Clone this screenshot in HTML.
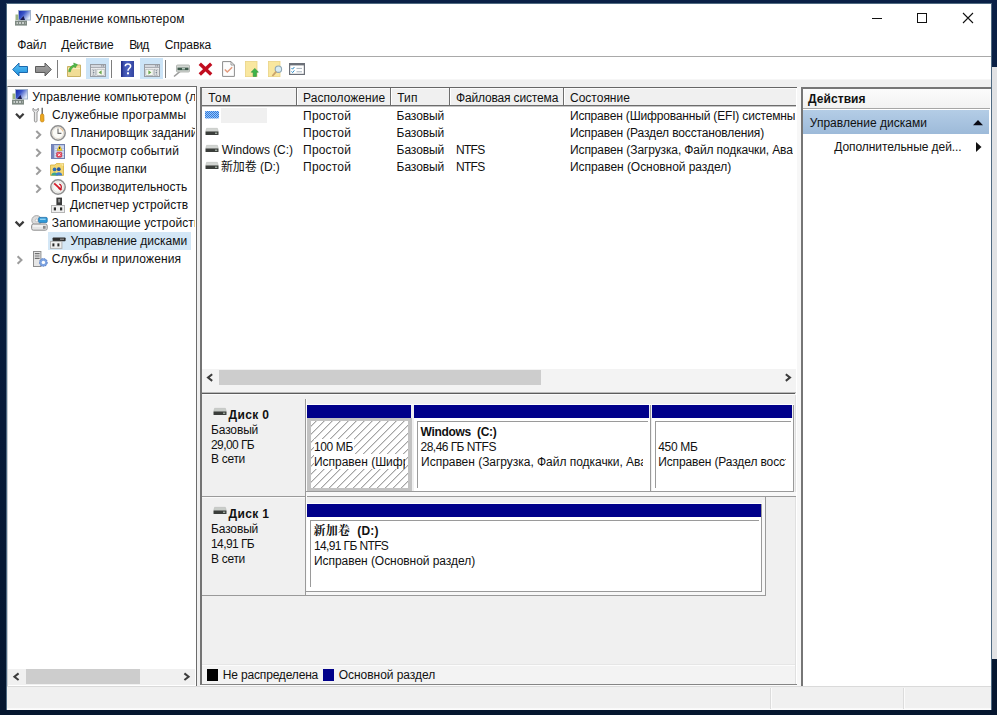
<!DOCTYPE html>
<html lang="ru">
<head>
<meta charset="utf-8">
<title>Управление компьютером</title>
<style>
html,body{margin:0;padding:0}
body{width:997px;height:715px;overflow:hidden;background:linear-gradient(#0a2046,#05162f);position:relative;font-family:"Liberation Sans","Noto Sans CJK SC",sans-serif;font-size:12px;color:#111}
.a{position:absolute}
.t{position:absolute;white-space:nowrap;line-height:16px;height:16px}
svg{position:absolute;overflow:visible}
</style>
</head>
<body>
<!-- window frame -->
<div class="a" style="left:992px;top:67px;width:5px;height:592px;background:#e1e2e4"></div>
<div class="a" style="left:6px;top:3px;width:986px;height:707px;background:#4f6a82"></div>
<div class="a" id="win" style="left:7px;top:4px;width:984px;height:706px;background:#fff"></div>
<!-- menu/toolbar separator -->
<div class="a" style="left:7px;top:56px;width:984px;height:1px;background:#a9a9a9"></div>
<!-- client area -->
<div class="a" style="left:7px;top:80px;width:984px;height:630px;background:#f0f0f0"></div>
<div class="a" style="left:7px;top:79px;width:984px;height:1px;background:#f6f6f6"></div>
<div class="a" style="left:7px;top:708px;width:984px;height:2px;background:linear-gradient(#f8f8f8,#fdfdfd)"></div>

<!-- title bar icon -->
<svg style="left:15px;top:10px" width="16" height="16" viewBox="0 0 16 16">
<defs><linearGradient id="scr" x1="0" y1="0" x2="1" y2="0.6"><stop offset="0" stop-color="#1524a8"/><stop offset="0.45" stop-color="#3a55c8"/><stop offset="1" stop-color="#dfe9f7"/></linearGradient></defs>
<rect x="3.5" y="0.5" width="12" height="9.5" fill="url(#scr)" stroke="#9fb2cc" stroke-width="1"/>
<path d="M5 10 L8.5 6 L10 10 Z" fill="#1a1a50"/>
<rect x="0.5" y="4.5" width="2.6" height="5.5" fill="#9cb381"/>
<rect x="0" y="10.6" width="12" height="5" fill="#7f8a83"/>
<rect x="1.5" y="12.2" width="9" height="1.6" fill="#d9dedb"/>
<rect x="3" y="12.2" width="1" height="1.6" fill="#6b7570"/><rect x="6" y="12.2" width="1" height="1.6" fill="#6b7570"/><rect x="9" y="12.2" width="1" height="1.6" fill="#6b7570"/>
</svg>
<!-- caption buttons -->
<svg style="left:872px;top:13px" width="102" height="11" viewBox="0 0 102 11">
<path d="M0 5.5 H10" stroke="#111" stroke-width="1"/>
<rect x="45.5" y="0.5" width="9" height="9" fill="none" stroke="#111" stroke-width="1"/>
<path d="M91 0 L101 10 M101 0 L91 10" stroke="#111" stroke-width="1.1"/>
</svg>

<!-- toolbar highlighted buttons -->
<div class="a" style="left:86px;top:58px;width:23px;height:21px;background:#cce4f7"></div>
<div class="a" style="left:140px;top:58px;width:23px;height:21px;background:#cce4f7"></div>
<!-- toolbar separators -->
<div class="a" style="left:57px;top:60px;width:1px;height:18px;background:#7d7d7d"></div>
<div class="a" style="left:111px;top:60px;width:1px;height:18px;background:#7d7d7d"></div>
<div class="a" style="left:165px;top:60px;width:1px;height:18px;background:#7d7d7d"></div>
<!-- back / forward -->
<svg style="left:12px;top:62px" width="40" height="15" viewBox="0 0 40 15">
<defs><linearGradient id="gb" x1="0" y1="0" x2="0" y2="1"><stop offset="0" stop-color="#5cc3f5"/><stop offset="1" stop-color="#1d8fde"/></linearGradient>
<linearGradient id="gf" x1="0" y1="0" x2="0" y2="1"><stop offset="0" stop-color="#a9a9a9"/><stop offset="1" stop-color="#7f7f7f"/></linearGradient></defs>
<path d="M0.7 7.5 L7 1 L7 4.5 L15.5 4.5 L15.5 10.5 L7 10.5 L7 14 Z" fill="url(#gb)" stroke="#1c68ad" stroke-width="1" stroke-linejoin="round"/>
<path d="M39.3 7.5 L33 1 L33 4.5 L23.5 4.5 L23.5 10.5 L33 10.5 L33 14 Z" fill="url(#gf)" stroke="#5c5c5c" stroke-width="1" stroke-linejoin="round"/>
</svg>
<!-- up folder -->
<svg style="left:66px;top:62px" width="16" height="16" viewBox="0 0 16 16">
<path d="M1.5 4.5 H6.5 L8 3 H14.5 V14.5 H1.5 Z" fill="#f1dd96" stroke="#c9b264" stroke-width="1"/>
<path d="M2 6.6 H14" stroke="#f9efc4" stroke-width="1"/>
<path d="M2.6 9.6 C3 6 5.4 3.4 8.2 2.8 L7.6 1 L11.4 2.6 L9 6 L8.6 4.4 C6.6 5.2 4.8 7 4.4 9.8 Z" fill="#53ba4c" stroke="#34942f" stroke-width="0.5"/>
</svg>
<!-- show/hide console tree -->
<svg style="left:90px;top:64px" width="16" height="13" viewBox="0 0 16 13">
<rect x="0.5" y="0.5" width="15" height="12" fill="#fdfdfd" stroke="#979ca3"/>
<rect x="1" y="1" width="14" height="2" fill="#d4d8de"/>
<rect x="11.2" y="1.3" width="1.2" height="1.2" fill="#7d838c"/><rect x="13" y="1.3" width="1.2" height="1.2" fill="#7d838c"/>
<path d="M1 3.6 H15" stroke="#979ca3" stroke-width="0.9"/>
<rect x="2" y="5.2" width="3.4" height="6.3" fill="#fff" stroke="#a4a9b0" stroke-width="0.7"/>
<path d="M2.9 6.8 H4.5 M2.9 8.4 H4.5 M2.9 10 H4.5" stroke="#5e6b78" stroke-width="0.9"/>
<rect x="6.8" y="5.2" width="7.4" height="6.3" fill="#f6f8f1" stroke="#a4a9b0" stroke-width="0.7"/>
<path d="M11.6 6.3 L8.6 8.4 L11.6 10.5 Z" fill="#6aa84f"/>
</svg>
<!-- help -->
<svg style="left:121px;top:61px" width="13" height="16" viewBox="0 0 13 16">
<defs><linearGradient id="gh" x1="0" y1="0" x2="1" y2="0"><stop offset="0" stop-color="#2f3f9c"/><stop offset="0.5" stop-color="#4c62c0"/><stop offset="1" stop-color="#33439f"/></linearGradient></defs>
<rect x="0" y="0" width="13" height="16" fill="url(#gh)"/>
<rect x="0" y="0" width="1.5" height="16" fill="#25318a"/>
<path d="M4.3 5.2 C4.3 2.2 9.6 2.2 9.6 5.2 C9.6 7.2 7 7.4 7 9.8" fill="none" stroke="#fff" stroke-width="1.6"/>
<rect x="6" y="11.3" width="2" height="2" fill="#fff"/>
</svg>
<!-- show/hide action pane -->
<svg style="left:144px;top:64px" width="16" height="13" viewBox="0 0 16 13">
<rect x="0.5" y="0.5" width="15" height="12" fill="#fdfdfd" stroke="#979ca3"/>
<rect x="1" y="1" width="14" height="2" fill="#d4d8de"/>
<rect x="11.2" y="1.3" width="1.2" height="1.2" fill="#7d838c"/><rect x="13" y="1.3" width="1.2" height="1.2" fill="#7d838c"/>
<path d="M1 3.6 H15" stroke="#979ca3" stroke-width="0.9"/>
<rect x="10.6" y="5.2" width="3.4" height="6.3" fill="#fff" stroke="#a4a9b0" stroke-width="0.7"/>
<path d="M11.5 6.8 H13.1 M11.5 8.4 H13.1 M11.5 10 H13.1" stroke="#5e6b78" stroke-width="0.9"/>
<rect x="1.8" y="5.2" width="7.4" height="6.3" fill="#f6f8f1" stroke="#a4a9b0" stroke-width="0.7"/>
<path d="M4.4 6.3 L7.4 8.4 L4.4 10.5 Z" fill="#6aa84f"/>
</svg>
<!-- connect disk -->
<svg style="left:173px;top:64px" width="17" height="14" viewBox="0 0 17 14">
<path d="M7 7.5 L1 12.5" stroke="#9a9a9a" stroke-width="1.6"/>
<rect x="3.5" y="1" width="13" height="7" rx="1" fill="#d4d8d4" stroke="#a5aaa5" stroke-width="0.8"/>
<rect x="4.5" y="3.6" width="11" height="2.6" fill="#3f5a4c"/>
<rect x="9" y="4.2" width="3" height="1.2" fill="#cfe0d4"/>
</svg>
<!-- delete -->
<svg style="left:198px;top:62px" width="15" height="14" viewBox="0 0 15 14">
<path d="M1.8 1.8 L13.2 12.4 M13.2 1.8 L1.8 12.4" stroke="#c10d1f" stroke-width="3.4" stroke-linecap="butt"/>
</svg>
<!-- properties (doc with check) -->
<svg style="left:222px;top:61px" width="13" height="16" viewBox="0 0 13 16">
<path d="M0.6 0.6 H9 L12.4 4 V15.4 H0.6 Z" fill="#fdfdfd" stroke="#8c8c8c" stroke-width="1"/>
<path d="M9 0.6 V4 H12.4" fill="none" stroke="#8c8c8c" stroke-width="0.9"/>
<path d="M2.8 8.5 L5.3 11 L10.2 6.2" fill="none" stroke="#e39a7c" stroke-width="1.5"/>
</svg>
<!-- export list -->
<svg style="left:245px;top:61px" width="14" height="16" viewBox="0 0 14 16">
<rect x="0.4" y="0.4" width="11.6" height="15.2" fill="#f9e79f" stroke="#ead486" stroke-width="0.8"/>
<path d="M9.8 7.4 L13.4 11.2 H11.4 V15.4 H8.2 V11.2 H6.2 Z" fill="#3db54a" stroke="#2a8f37" stroke-width="0.6"/>
</svg>
<!-- find -->
<svg style="left:268px;top:61px" width="14" height="16" viewBox="0 0 14 16">
<rect x="0.4" y="0.4" width="11.6" height="15.2" fill="#f9e79f" stroke="#ead486" stroke-width="0.8"/>
<circle cx="10.4" cy="8.2" r="3.2" fill="#d7ecf6" stroke="#8fa7b5" stroke-width="1.1"/>
<path d="M8.2 10.6 L4.4 15" stroke="#c9a36b" stroke-width="1.8"/>
</svg>
<!-- checklist -->
<svg style="left:289px;top:63px" width="16" height="12" viewBox="0 0 16 12">
<rect x="0.6" y="0.6" width="14.8" height="10.8" fill="#fff" stroke="#6c7078" stroke-width="1.2"/>
<rect x="0.6" y="0.6" width="14.8" height="1.8" fill="#6c7078"/>
<path d="M2.5 5 L3.6 6.2 L5.4 4 M2.5 8.4 L3.6 9.6 L5.4 7.4" fill="none" stroke="#2f8fcb" stroke-width="1"/>
<path d="M7.5 5.4 H13 M7.5 8.8 H13" stroke="#a9b4bf" stroke-width="1"/>
</svg>

<!-- tree panel -->
<div class="a" style="left:7px;top:86px;width:190px;height:601px;background:#fff;box-sizing:border-box;border:1px solid #6c6c6c;border-left-color:#c8ccd2"></div>
<!-- tree selection -->
<div class="a" style="left:48px;top:232px;width:143px;height:18px;background:#d4e7f6"></div>
<!-- tree scrollbar -->
<div class="a" style="left:8px;top:669px;width:187px;height:16px;background:#f0f0f0"></div>
<div class="a" style="left:26px;top:669px;width:114px;height:15px;background:#cdcdcd"></div>
<svg style="left:8px;top:669px" width="187" height="16" viewBox="0 0 187 16"><path d="M10.6 4.4 L6.4 7.7 L10.6 11" fill="none" stroke="#3c3c3c" stroke-width="2"/><path d="M176.4 4.4 L180.6 7.7 L176.4 11" fill="none" stroke="#3c3c3c" stroke-width="2"/></svg>
<!-- tree chevrons -->
<svg style="left:0;top:0" width="200" height="300" viewBox="0 0 200 300">
<g fill="none" stroke="#3a3a3a" stroke-width="2.2">
<path d="M16 113.8 L19.8 117.6 L23.6 113.8"/>
<path d="M15.6 221.6 L19.6 225.6 L23.6 221.6"/>
</g>
<g fill="none" stroke="#9c9c9c" stroke-width="2">
<path d="M36.3 131 L40.2 134.8 L36.3 138.6"/>
<path d="M36.3 149 L40.2 152.8 L36.3 156.6"/>
<path d="M36.3 167 L40.2 170.8 L36.3 174.6"/>
<path d="M36.3 185 L40.2 188.8 L36.3 192.6"/>
<path d="M17.6 256.2 L21.5 260 L17.6 263.8"/>
</g>
</svg>
<!-- root icon -->
<svg style="left:12px;top:89px" width="16" height="16" viewBox="0 0 16 16">
<rect x="3.5" y="0.5" width="12" height="9.5" fill="url(#scr)" stroke="#9fb2cc" stroke-width="1"/>
<path d="M5 10 L8.5 6 L10 10 Z" fill="#1a1a50"/>
<rect x="0.5" y="4.5" width="2.6" height="5.5" fill="#9cb381"/>
<rect x="0" y="10.6" width="12" height="5" fill="#7f8a83"/>
<rect x="1.5" y="12.2" width="9" height="1.6" fill="#d9dedb"/>
<rect x="3" y="12.2" width="1" height="1.6" fill="#6b7570"/><rect x="6" y="12.2" width="1" height="1.6" fill="#6b7570"/><rect x="9" y="12.2" width="1" height="1.6" fill="#6b7570"/>
</svg>
<!-- system tools -->
<svg style="left:32px;top:107px" width="14" height="16" viewBox="0 0 14 16">
<path d="M1.2 1.2 C0.4 2.6 0.8 4.4 2.4 5 L2.4 14 C2.4 15.4 5 15.4 5 14 L5 5 C6.6 4.4 7 2.6 6.2 1.2 L5 3 L2.4 3 Z" fill="#e9e9e9" stroke="#8c8c8c" stroke-width="0.9"/>
<path d="M10.2 0.8 V7.4" stroke="#5a5a5a" stroke-width="1.3"/>
<path d="M8.6 8 C8.6 6.6 11.8 6.6 11.8 8 L12 13.6 C12 15.4 8.4 15.4 8.4 13.6 Z" fill="#eda81e" stroke="#c4830e" stroke-width="0.7"/>
</svg>
<!-- task scheduler (clock) -->
<svg style="left:50px;top:125px" width="16" height="16" viewBox="0 0 16 16">
<circle cx="8" cy="8" r="7.2" fill="#f4f4f2" stroke="#8f8f8f" stroke-width="1.5"/>
<circle cx="8" cy="8" r="5.6" fill="#fbfbf8" stroke="#d9d3c8" stroke-width="0.8"/>
<path d="M8 3.6 V8.4 H11.4" fill="none" stroke="#6d6d6d" stroke-width="1.1"/>
<path d="M10 3 A5.4 5.4 0 0 1 13 6.2" fill="none" stroke="#f1c899" stroke-width="1.2"/>
</svg>
<!-- event viewer -->
<svg style="left:51px;top:144px" width="14" height="15" viewBox="0 0 14 15">
<rect x="0.5" y="0.5" width="13" height="14" fill="#b9c6e6" stroke="#6f7fb0" stroke-width="1"/>
<rect x="0.5" y="0.5" width="2.6" height="14" fill="#7686bd"/>
<path d="M4 3 H13 M4 5.5 H13 M4 8 H13 M4 10.5 H13 M4 13 H13" stroke="#e8edf8" stroke-width="0.8"/>
<path d="M8.6 1.6 L11.2 6.4 H6 Z" fill="#f4cf2c" stroke="#b8950d" stroke-width="0.5"/>
<rect x="8.15" y="3" width="0.9" height="2" fill="#222"/>
<rect x="5.6" y="8.2" width="5.2" height="5" rx="1" fill="#e8455b" stroke="#b52236" stroke-width="0.5"/>
<path d="M7 9.5 L9.4 12 M9.4 9.5 L7 12" stroke="#fff" stroke-width="0.9"/>
</svg>
<!-- shared folders -->
<svg style="left:50px;top:163px" width="14" height="13" viewBox="0 0 14 13">
<path d="M0.5 2 H5 L6.3 0.6 H13.5 V12.4 H0.5 Z" fill="#f4d772" stroke="#d8b548" stroke-width="0.9"/>
<path d="M10.2 0.9 L12.8 0.9 L12.8 3" fill="none" stroke="#fbeeb6" stroke-width="0.9"/>
<circle cx="4.6" cy="6.4" r="1.9" fill="#2f6db5"/><path d="M1.2 12.4 C1.2 8.4 8 8.4 8 12.4 Z" fill="#3aa88c"/>
<circle cx="8.8" cy="6.2" r="1.9" fill="#28549e"/><path d="M5.6 12.4 C5.6 8.2 12.2 8.2 12.2 12.4 Z" fill="#3f7fd0"/>
</svg>
<!-- performance -->
<svg style="left:50px;top:179px" width="16" height="16" viewBox="0 0 16 16">
<circle cx="8" cy="8" r="7.2" fill="#f7f7f5" stroke="#8f8f8f" stroke-width="1.5"/>
<circle cx="8" cy="8" r="5.4" fill="none" stroke="#d9d9d4" stroke-width="0.8"/>
<path d="M4.2 4.4 L11.4 11" stroke="#d61e2c" stroke-width="1.8"/>
<path d="M9.2 5.2 C11.4 5.6 12 8.4 10.6 10.2 L8.6 9.4" fill="none" stroke="#c2192a" stroke-width="1.3"/>
</svg>
<!-- device manager -->
<svg style="left:51px;top:197px" width="14" height="16" viewBox="0 0 14 16">
<rect x="5.4" y="0.6" width="5.6" height="8" fill="#3a3a3a"/>
<rect x="7.2" y="2" width="2" height="3.4" fill="#9a9a9a"/>
<rect x="0.5" y="8.5" width="13" height="7" fill="#efefef" stroke="#b5b5b5" stroke-width="1"/>
<rect x="2.8" y="10.4" width="2.2" height="3" fill="#2c2c2c"/><rect x="9" y="10.4" width="2.2" height="3" fill="#2c2c2c"/>
</svg>
<!-- storage -->
<svg style="left:31px;top:215px" width="17" height="16" viewBox="0 0 17 16">
<circle cx="5.6" cy="5.4" r="4.8" fill="#dcdcdc" stroke="#a0a0a0" stroke-width="0.9"/>
<circle cx="5.6" cy="5.4" r="1.4" fill="#f8f8f8" stroke="#a8a8a8" stroke-width="0.6"/>
<rect x="7.6" y="2.4" width="8.6" height="5.2" rx="1" fill="#2f9ad8" stroke="#1f6fa8" stroke-width="0.8"/>
<rect x="9" y="3.6" width="5.6" height="1.4" fill="#8fd0f2"/>
<rect x="0.6" y="9" width="15.6" height="6.2" rx="1.8" fill="#e4e4e4" stroke="#8e8e8e" stroke-width="1"/>
<path d="M2 11 H12" stroke="#fafafa" stroke-width="1.2"/>
<rect x="12" y="11" width="2.6" height="2.8" fill="#8a8a8a"/>
</svg>
<!-- disk management -->
<svg style="left:50px;top:237px" width="16" height="12" viewBox="0 0 16 12">
<rect x="2.6" y="0.4" width="13" height="3.8" rx="0.8" fill="#2e2e2e"/>
<rect x="10" y="1.6" width="4" height="1.2" fill="#8f8f8f"/>
<rect x="0.5" y="4.4" width="11.4" height="7" fill="#f0f0f0" stroke="#b2b2b2" stroke-width="1"/>
<rect x="2.4" y="6.4" width="2" height="3" fill="#2c2c2c"/><rect x="7.4" y="6.4" width="2" height="3" fill="#2c2c2c"/>
</svg>
<!-- services and apps -->
<svg style="left:33px;top:251px" width="15" height="16" viewBox="0 0 15 16">
<rect x="0.5" y="0.5" width="7.4" height="15" fill="#e6e6e6" stroke="#8e8e8e" stroke-width="1"/>
<path d="M1.8 2.6 H6.6 M1.8 5 H6.6 M1.8 7.4 H6.6" stroke="#707070" stroke-width="1.1"/>
<circle cx="10.4" cy="11.4" r="3.9" fill="#7da3e0" stroke="#4e73c0" stroke-width="0.8" stroke-dasharray="1.6 1"/>
<circle cx="10.4" cy="11.4" r="1.7" fill="#fff"/>
</svg>

<!-- center panel -->
<div class="a" style="left:200px;top:87px;width:597px;height:598px;background:#fff;box-sizing:border-box;border-left:2px solid #747474;border-top:1px solid #666;border-bottom:1px solid #858585"></div>
<div class="a" style="left:200px;top:685px;width:597px;height:1px;background:#fbfbfb"></div>
<div class="a" style="left:797px;top:87px;width:4px;height:600px;background:#f7f7f7"></div>
<!-- list header -->
<div class="a" style="left:202px;top:88px;width:594px;height:17px;background:#f0f0f0;border-bottom:1px solid #6d6d6d"></div><div class="a" style="left:202px;top:106px;width:594px;height:1px;background:#c4c4c4"></div>
<div class="a" style="left:202px;top:88px;width:594px;height:1px;background:#fbfbfb"></div>
<div class="a" style="left:296px;top:88px;width:1px;height:17px;background:#6d6d6d"></div><div class="a" style="left:297px;top:88px;width:1px;height:17px;background:#fff"></div>
<div class="a" style="left:390px;top:88px;width:1px;height:17px;background:#6d6d6d"></div><div class="a" style="left:391px;top:88px;width:1px;height:17px;background:#fff"></div>
<div class="a" style="left:449px;top:88px;width:1px;height:17px;background:#6d6d6d"></div><div class="a" style="left:450px;top:88px;width:1px;height:17px;background:#fff"></div>
<div class="a" style="left:563px;top:88px;width:1px;height:17px;background:#6d6d6d"></div><div class="a" style="left:564px;top:88px;width:1px;height:17px;background:#fff"></div>
<!-- row1 blur block -->
<div class="a" style="left:221px;top:108px;width:46px;height:15px;background:#f0f0f0"></div>
<!-- volume icons -->
<svg style="left:205px;top:108px" width="14" height="64" viewBox="0 0 14 64">
<defs><pattern id="dth" width="2" height="2" patternUnits="userSpaceOnUse"><rect width="2" height="2" fill="#2d7be0"/><rect width="1" height="1" fill="#9cc4f4"/><rect x="1" y="1" width="1" height="1" fill="#9cc4f4"/></pattern></defs>
<rect x="0" y="3" width="14" height="7.6" rx="1" fill="url(#dth)"/>
<g transform="translate(0 0)"><path d="M1.6 20.3 H12.4 L13.4 23.7 H0.6 Z" fill="#d2d5d2" stroke="#b4b8b4" stroke-width="0.5"/><rect x="0.5" y="23.6" width="13" height="3.4" rx="0.5" fill="#3b3e3b"/><rect x="10" y="24.7" width="2.2" height="1" fill="#c5d4c8"/></g>
<g transform="translate(0 17)"><path d="M1.6 20.3 H12.4 L13.4 23.7 H0.6 Z" fill="#d2d5d2" stroke="#b4b8b4" stroke-width="0.5"/><rect x="0.5" y="23.6" width="13" height="3.4" rx="0.5" fill="#3b3e3b"/><rect x="10" y="24.7" width="2.2" height="1" fill="#c5d4c8"/></g>
<g transform="translate(0 34)"><path d="M1.6 20.3 H12.4 L13.4 23.7 H0.6 Z" fill="#d2d5d2" stroke="#b4b8b4" stroke-width="0.5"/><rect x="0.5" y="23.6" width="13" height="3.4" rx="0.5" fill="#3b3e3b"/><rect x="10" y="24.7" width="2.2" height="1" fill="#c5d4c8"/></g>
</svg>
<!-- list scrollbar -->
<div class="a" style="left:202px;top:369px;width:594px;height:23px;background:#f3f3f3"></div>
<div class="a" style="left:219px;top:370px;width:322px;height:15px;background:#cdcdcd"></div>
<svg style="left:202px;top:369px" width="594" height="17" viewBox="0 0 594 17"><path d="M10.2 5.3 L6 8.6 L10.2 11.9" fill="none" stroke="#3c3c3c" stroke-width="2"/><path d="M583.8 5.3 L588 8.6 L583.8 11.9" fill="none" stroke="#3c3c3c" stroke-width="2"/></svg>
<!-- splitter -->
<div class="a" style="left:202px;top:392px;width:594px;height:1px;background:#b9b9b9"></div>
<div class="a" style="left:202px;top:393px;width:594px;height:1px;background:#5c5c5c"></div>
<!-- graphical view -->
<div class="a" style="left:202px;top:394px;width:594px;height:290px;background:#f0f0f0"></div>
<div class="a" style="left:795px;top:393px;width:1px;height:291px;background:#e0e0e0"></div>
<!-- disk 0 row -->
<div class="a" style="left:202px;top:394px;width:594px;height:1px;background:#fafafa"></div>
<div class="a" style="left:202px;top:496px;width:594px;height:1px;background:#9a9a9a"></div>
<div class="a" style="left:305px;top:399px;width:1px;height:98px;background:#9a9a9a"></div>
<div class="a" style="left:306px;top:399px;width:1px;height:98px;background:#fbfbfb"></div>
<div class="a" style="left:306px;top:491px;width:488px;height:1px;background:#9a9a9a"></div>
<div class="a" style="left:306px;top:492px;width:490px;height:4px;background:#f8f8f8"></div>
<div class="a" style="left:306px;top:404px;width:488px;height:1px;background:#fdfdfd"></div>
<div class="a" style="left:307px;top:405px;width:104px;height:13px;background:#00008a"></div>
<div class="a" style="left:414px;top:405px;width:235px;height:13px;background:#00008a"></div>
<div class="a" style="left:652px;top:405px;width:140px;height:13px;background:#00008a"></div>
<!-- selected hatched partition -->
<div class="a" style="left:307px;top:418px;width:105px;height:73px;background:#c2c2c2"></div>
<svg style="left:311px;top:421px" width="97" height="67" viewBox="0 0 97 67"><defs><pattern id="hat" width="8" height="8" patternUnits="userSpaceOnUse" patternTransform="translate(-2.7 0)"><path d="M-1 9 L9 -1 M-1 1 L1 -1 M7 9 L9 7" stroke="#6e6e6e" stroke-width="0.9"/></pattern></defs><rect width="97" height="67" fill="#fff"/><rect width="97" height="67" fill="url(#hat)"/></svg>
<!-- windows partition -->
<div class="a" style="left:414px;top:418px;width:236px;height:73px;background:#fff"></div>
<div class="a" style="left:650px;top:405px;width:1px;height:87px;background:#9a9a9a"></div>
<div class="a" style="left:417px;top:421px;width:231px;height:1px;background:#9a9a9a"></div>
<div class="a" style="left:417px;top:421px;width:1px;height:67px;background:#9a9a9a"></div>
<!-- recovery partition -->
<div class="a" style="left:652px;top:418px;width:141px;height:73px;background:#fff"></div>
<div class="a" style="left:793px;top:405px;width:1px;height:87px;background:#9a9a9a"></div>
<div class="a" style="left:655px;top:421px;width:136px;height:1px;background:#9a9a9a"></div>
<div class="a" style="left:655px;top:421px;width:1px;height:67px;background:#9a9a9a"></div>
<!-- disk 1 row -->
<div class="a" style="left:202px;top:497px;width:103px;height:1px;background:#fafafa"></div>
<div class="a" style="left:202px;top:595px;width:564px;height:1px;background:#9a9a9a"></div>
<div class="a" style="left:305px;top:497px;width:1px;height:98px;background:#9a9a9a"></div>
<div class="a" style="left:306px;top:497px;width:1px;height:98px;background:#fbfbfb"></div>
<div class="a" style="left:765px;top:497px;width:1px;height:99px;background:#9a9a9a"></div>
<div class="a" style="left:306px;top:591px;width:456px;height:1px;background:#9a9a9a"></div>
<div class="a" style="left:306px;top:592px;width:459px;height:3px;background:#f8f8f8"></div>
<div class="a" style="left:762px;top:500px;width:3px;height:95px;background:#f8f8f8"></div>
<div class="a" style="left:761px;top:504px;width:1px;height:88px;background:#9a9a9a"></div>
<div class="a" style="left:306px;top:503px;width:456px;height:1px;background:#fdfdfd"></div>
<div class="a" style="left:307px;top:504px;width:454px;height:13px;background:#00008a"></div>
<div class="a" style="left:307px;top:517px;width:454px;height:74px;background:#fff"></div>
<div class="a" style="left:310px;top:520px;width:449px;height:1px;background:#9a9a9a"></div>
<div class="a" style="left:310px;top:520px;width:1px;height:67px;background:#9a9a9a"></div>
<!-- disk label icons -->
<svg style="left:213px;top:408px" width="14" height="8" viewBox="0 0 14 8"><path d="M1.6 0.3 H12.4 L13.4 3.7 H0.6 Z" fill="#c9cdc9" stroke="#b4b8b4" stroke-width="0.5"/><rect x="0.5" y="3.6" width="13" height="3.3" rx="0.5" fill="#3b3e3b"/><rect x="10" y="4.7" width="2.2" height="1" fill="#c5d4c8"/></svg>
<svg style="left:213px;top:507px" width="14" height="8" viewBox="0 0 14 8"><path d="M1.6 0.3 H12.4 L13.4 3.7 H0.6 Z" fill="#c9cdc9" stroke="#b4b8b4" stroke-width="0.5"/><rect x="0.5" y="3.6" width="13" height="3.3" rx="0.5" fill="#3b3e3b"/><rect x="10" y="4.7" width="2.2" height="1" fill="#c5d4c8"/></svg>
<!-- legend -->
<div class="a" style="left:202px;top:664px;width:593px;height:1px;background:#e6e6e6"></div><div class="a" style="left:202px;top:665px;width:593px;height:19px;background:#f3f3f3"></div><div class="a" style="left:202px;top:665px;width:593px;height:1px;background:#fcfcfc"></div>
<div class="a" style="left:207px;top:669px;width:11px;height:12px;background:#000"></div>
<div class="a" style="left:323px;top:669px;width:11px;height:12px;background:#00008a"></div>

<!-- actions panel -->
<div class="a" style="left:801px;top:87px;width:190px;height:599px;background:#fff;box-sizing:border-box;border-left:2px solid #767676;border-top:2px solid #767676"></div>
<div class="a" style="left:803px;top:89px;width:187px;height:19px;background:linear-gradient(#fbfbfb,#f2f2f2);border-bottom:1px solid #a6a6a6"></div>
<div class="a" style="left:803px;top:110px;width:186px;height:24px;background:linear-gradient(#b4cde6,#9dbad9)"></div>
<svg style="left:973px;top:120px" width="10" height="5" viewBox="0 0 10 5"><path d="M0 5.2 L5 0 L10 5.2 Z" fill="#0a0a14"/></svg>
<svg style="left:976px;top:142px" width="6" height="10" viewBox="0 0 6 10"><path d="M0 0 L5.5 5 L0 10 Z" fill="#111"/></svg>
<!-- status bar -->
<div class="a" style="left:7px;top:686px;width:984px;height:1px;background:#dadada"></div>
<div class="a" style="left:770px;top:688px;width:1px;height:21px;background:#dcdcdc"></div><div class="a" style="left:771px;top:688px;width:1px;height:21px;background:#fbfbfb"></div>
<div class="a" style="left:903px;top:688px;width:1px;height:21px;background:#dcdcdc"></div><div class="a" style="left:904px;top:688px;width:1px;height:21px;background:#fbfbfb"></div>

<div class="t" style="left:35.3px;top:11.0px;letter-spacing:0.18px;">Управление компьютером</div>
<div class="t" style="left:17.2px;top:37.0px;letter-spacing:-0.10px;">Файл</div>
<div class="t" style="left:61.2px;top:37.0px;letter-spacing:-0.05px;">Действие</div>
<div class="t" style="left:129.2px;top:37.0px;letter-spacing:-0.84px;">Вид</div>
<div class="t" style="left:164.8px;top:37.0px;letter-spacing:-0.10px;">Справка</div>
<div class="t" style="left:32.3px;top:89.0px;letter-spacing:0.17px;width:163.2px;overflow:hidden;">Управление компьютером (локальный)</div>
<div class="t" style="left:52.0px;top:107.0px;letter-spacing:0.16px;">Служебные программы</div>
<div class="t" style="left:70.8px;top:125.0px;letter-spacing:0.01px;width:124.7px;overflow:hidden;">Планировщик заданий</div>
<div class="t" style="left:70.8px;top:143.0px;letter-spacing:0.18px;">Просмотр событий</div>
<div class="t" style="left:70.8px;top:161.0px;letter-spacing:0.16px;">Общие папки</div>
<div class="t" style="left:70.8px;top:179.0px;letter-spacing:-0.00px;">Производительность</div>
<div class="t" style="left:70.0px;top:197.0px;letter-spacing:0.05px;">Диспетчер устройств</div>
<div class="t" style="left:51.8px;top:215.0px;letter-spacing:0.11px;width:143.7px;overflow:hidden;">Запоминающие устройства</div>
<div class="t" style="left:70.4px;top:233.0px;letter-spacing:-0.01px;">Управление дисками</div>
<div class="t" style="left:51.8px;top:251.0px;letter-spacing:0.13px;">Службы и приложения</div>
<div class="t" style="left:208.2px;top:89.5px;letter-spacing:0.52px;">Том</div>
<div class="t" style="left:303.1px;top:89.5px;letter-spacing:0.04px;">Расположение</div>
<div class="t" style="left:397.2px;top:89.5px;letter-spacing:0.13px;">Тип</div>
<div class="t" style="left:456.0px;top:89.5px;letter-spacing:-0.16px;">Файловая система</div>
<div class="t" style="left:570.0px;top:89.5px;letter-spacing:0.00px;">Состояние</div>
<div class="t" style="left:303.1px;top:107.7px;letter-spacing:0.18px;">Простой</div>
<div class="t" style="left:396.6px;top:107.7px;letter-spacing:-0.08px;">Базовый</div>
<div class="t" style="left:303.1px;top:124.6px;letter-spacing:0.18px;">Простой</div>
<div class="t" style="left:396.6px;top:124.6px;letter-spacing:-0.08px;">Базовый</div>
<div class="t" style="left:303.1px;top:141.6px;letter-spacing:0.18px;">Простой</div>
<div class="t" style="left:396.6px;top:141.6px;letter-spacing:-0.08px;">Базовый</div>
<div class="t" style="left:303.1px;top:158.7px;letter-spacing:0.18px;">Простой</div>
<div class="t" style="left:396.6px;top:158.7px;letter-spacing:-0.08px;">Базовый</div>
<div class="t" style="left:456.0px;top:141.6px;letter-spacing:-0.71px;">NTFS</div>
<div class="t" style="left:456.0px;top:158.7px;letter-spacing:-0.71px;">NTFS</div>
<div class="t" style="left:221.7px;top:141.6px;letter-spacing:-0.07px;">Windows (C:)</div>
<div class="t" style="left:220.9px;top:158.7px;letter-spacing:-0.05px;">新加卷 (D:)</div>
<div class="t" style="left:570.0px;top:107.7px;letter-spacing:-0.17px;width:224.7px;overflow:hidden;">Исправен (Шифрованный (EFI) системный раздел)</div>
<div class="t" style="left:570.0px;top:124.6px;letter-spacing:-0.13px;">Исправен (Раздел восстановления)</div>
<div class="t" style="left:570.0px;top:141.6px;letter-spacing:-0.11px;width:222.9px;overflow:hidden;">Исправен (Загрузка, Файл подкачки, Аварийный дамп памяти, Основной раздел)</div>
<div class="t" style="left:570.0px;top:158.7px;letter-spacing:-0.05px;">Исправен (Основной раздел)</div>
<div class="t" style="left:808.0px;top:91.0px;letter-spacing:0.07px;font-weight:bold;">Действия</div>
<div class="t" style="left:809.8px;top:115.0px;letter-spacing:0.01px;">Управление дисками</div>
<div class="t" style="left:834.2px;top:139.2px;letter-spacing:-0.06px;">Дополнительные дей...</div>
<div class="t" style="left:228.6px;top:406.8px;letter-spacing:0.35px;font-weight:bold;">Диск 0</div>
<div class="t" style="left:211.0px;top:421.5px;letter-spacing:-0.14px;">Базовый</div>
<div class="t" style="left:211.0px;top:436.6px;letter-spacing:-0.57px;">29,00 ГБ</div>
<div class="t" style="left:211.0px;top:451.3px;letter-spacing:-0.30px;">В сети</div>
<div class="a" style="left:314px;top:439px;width:40px;height:15px;background:#fff"></div>
<div class="t" style="left:314.0px;top:438.5px;letter-spacing:-0.39px;">100 МБ</div>
<div class="a" style="left:314px;top:454px;width:91px;height:15px;background:#fff"></div>
<div class="t" style="left:314.0px;top:453.8px;letter-spacing:-0.02px;width:91.0px;overflow:hidden;">Исправен (Шифрованный (EFI) системный раздел)</div>
<div class="t" style="left:420.6px;top:424.0px;letter-spacing:-0.31px;font-weight:bold;white-space:pre;">Windows  (C:)</div>
<div class="t" style="left:420.6px;top:439.0px;letter-spacing:-0.55px;">28,46 ГБ NTFS</div>
<div class="t" style="left:421.1px;top:453.5px;letter-spacing:-0.03px;width:222.4px;overflow:hidden;">Исправен (Загрузка, Файл подкачки, Аварийный дамп памяти, Основной раздел)</div>
<div class="t" style="left:658.2px;top:439.0px;letter-spacing:-0.31px;">450 МБ</div>
<div class="t" style="left:658.2px;top:453.5px;letter-spacing:-0.12px;width:127.4px;overflow:hidden;">Исправен (Раздел восстановления)</div>
<div class="t" style="left:228.6px;top:505.5px;letter-spacing:0.35px;font-weight:bold;">Диск 1</div>
<div class="t" style="left:211.0px;top:520.7px;letter-spacing:-0.14px;">Базовый</div>
<div class="t" style="left:211.0px;top:535.6px;letter-spacing:-0.57px;">14,91 ГБ</div>
<div class="t" style="left:211.0px;top:550.6px;letter-spacing:-0.30px;">В сети</div>
<div class="t" style="left:313.5px;top:523.1px;letter-spacing:0.21px;font-weight:bold;white-space:pre;"><span style="font-family:'Liberation Sans','Noto Serif CJK SC',serif">新加卷</span>  (D:)</div>
<div class="t" style="left:314.0px;top:537.6px;letter-spacing:-0.63px;">14,91 ГБ NTFS</div>
<div class="t" style="left:314.0px;top:552.6px;letter-spacing:-0.05px;">Исправен (Основной раздел)</div>
<div class="t" style="left:222.8px;top:667.0px;letter-spacing:-0.17px;">Не распределена</div>
<div class="t" style="left:338.8px;top:667.0px;letter-spacing:-0.05px;">Основной раздел</div>
</body>
</html>
